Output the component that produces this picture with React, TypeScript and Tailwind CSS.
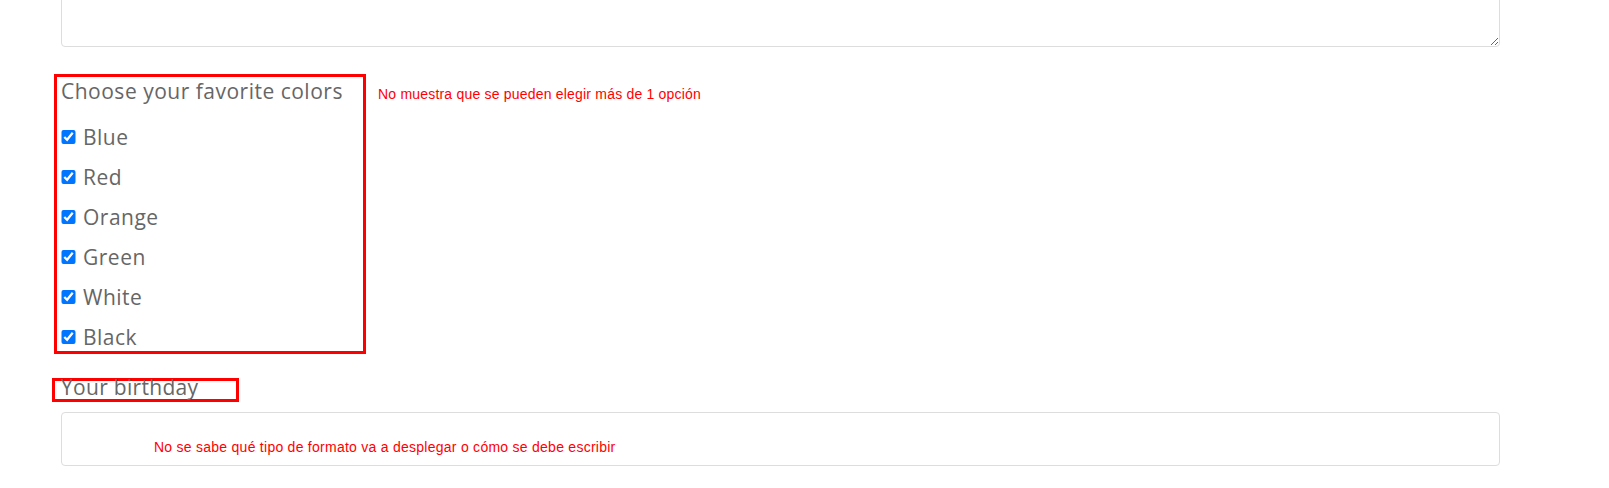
import React from "react";

const colors = ["Blue", "Red", "Orange", "Green", "White", "Black"];

export default function App() {
  return (
    <div className="h-[488px] w-[1609px] overflow-hidden bg-white">
      <div className="pl-[61px] pr-[109px] flex flex-col">
        <textarea className="-mt-[40px] h-[87px] w-full rounded-[4px] border border-[#dddddd] bg-white" />

        <div className="mt-[27px] flex items-start">
          <div className="-ml-[7px] w-[312px] h-[280px] border-[3px] border-[#ff0000] pl-[4px] flex flex-col text-[#666666] [font-family:'Open_Sans',sans-serif] tracking-[0.5px]">
            <div className="h-[28px] leading-[28px] text-[21px] whitespace-nowrap">Choose your favorite colors</div>
            <div className="mt-[20px] flex flex-col gap-[16px]">
              {colors.map((c) => (
                <label key={c} className="flex items-center h-[24px] gap-[7px] text-[21px] leading-[24px]">
                  <input type="checkbox" defaultChecked className="w-[15px] h-[14px] accent-[#0075ff]" />
                  <span>{c}</span>
                </label>
              ))}
            </div>
          </div>
          <div className="ml-[12px] mt-[12px] text-[14px] leading-[16px] tracking-[0.2px] text-[#ff0000] [font-family:'Liberation_Sans',Arial,sans-serif]">
            No muestra que se pueden elegir más de 1 opción
          </div>
        </div>

        <div className="mt-[24px] -ml-[9px] w-[187px] h-[24px] border-[3px] border-[#ff0000] pl-[6px] text-[#666666] [font-family:'Open_Sans',sans-serif] tracking-[0.3px]">
          <div className="text-[21px] leading-[12px] whitespace-nowrap">Your birthday</div>
        </div>

        <div className="mt-[10px] h-[54px] w-full rounded-[4px] border border-[#dddddd] pl-[92px] pt-[26px]">
          <div className="text-[14px] leading-[16px] tracking-[0.26px] text-[#ff0000] [font-family:'Liberation_Sans',Arial,sans-serif]">
            No se sabe qué tipo de formato va a desplegar o cómo se debe escribir
          </div>
        </div>
      </div>
    </div>
  );
}
